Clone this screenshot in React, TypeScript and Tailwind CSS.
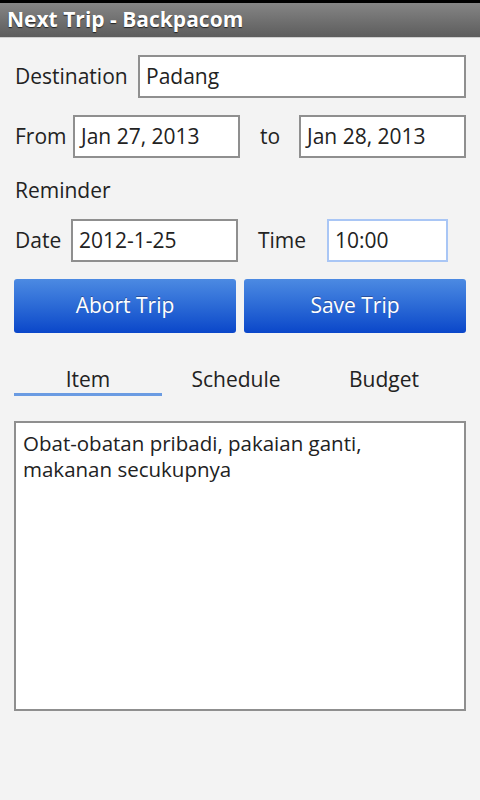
import { useState } from "react";

const tabs = ["Item", "Schedule", "Budget"];

function Field({ value, className = "", focused = false }: { value: string; className?: string; focused?: boolean }) {
  return (
    <div
      className={`h-[43px] bg-white border-2 flex items-center px-[6px] text-[21px] text-[#222] ${
        focused ? "border-[#a9c6f5]" : "border-[#8f8f8f]"
      } ${className}`}
    >
      {value}
    </div>
  );
}

export default function App() {
  const [tab, setTab] = useState(0);

  return (
    <div className="w-[480px] h-[800px] bg-[#f3f3f3] text-[#222] overflow-hidden" style={{ fontFamily: '"Open Sans", "Noto Sans", sans-serif' }}>
      <div className="h-[38px] border-t-[3px] border-black bg-gradient-to-b from-[#858585] to-[#5d5d5d] border-b border-b-[#cfcfcf] flex items-center px-[7px]">
        <span className="text-white font-bold text-[21px] [text-shadow:0_1px_1px_#222]">Next Trip - Backpacom</span>
      </div>

      <div className="px-[14px]">
        <div className="flex items-center mt-[17px]">
          <span className="text-[21px] ml-[1px] w-[123px]">Destination</span>
          <Field value="Padang" className="flex-1" />
        </div>

        <div className="flex items-center mt-[17px]">
          <span className="text-[21px] ml-[1px] w-[58px]">From</span>
          <Field value="Jan 27, 2013" className="w-[167px]" />
          <span className="text-[21px] ml-[20px] w-[39px]">to</span>
          <Field value="Jan 28, 2013" className="flex-1" />
        </div>

        <div className="text-[21px] ml-[1px] mt-[17px] h-[30px] leading-[30px]">Reminder</div>

        <div className="flex items-center mt-[14px]">
          <span className="text-[21px] ml-[1px] w-[56px]">Date</span>
          <Field value="2012-1-25" className="w-[167px]" />
          <span className="text-[21px] ml-[20px] w-[69px]">Time</span>
          <Field value="10:00" focused className="w-[121px]" />
        </div>

        <div className="flex gap-[8px] mt-[17px]">
          <button className="flex-1 h-[54px] rounded-[3px] bg-gradient-to-b from-[#4c8ae2] to-[#0a46c9] text-white text-[21px] [text-shadow:0_-1px_0_#2a4f9a]">
            Abort Trip
          </button>
          <button className="flex-1 h-[54px] rounded-[3px] bg-gradient-to-b from-[#4c8ae2] to-[#0a46c9] text-white text-[21px] [text-shadow:0_-1px_0_#2a4f9a]">
            Save Trip
          </button>
        </div>

        <div className="flex mt-[32px]">
          {tabs.map((t, i) => (
            <button key={t} onClick={() => setTab(i)} className="w-[148px] flex flex-col items-center">
              <span className="text-[21px] h-[28px] leading-[28px] text-[#222]">{t}</span>
              <span className={`h-[3px] w-full ${tab === i ? "bg-[#6a9be2]" : "bg-transparent"}`} />
            </button>
          ))}
        </div>

        <div className="mt-[25px] h-[290px] bg-white border-2 border-[#8f8f8f] px-[7px] pt-[7px] text-[20.5px] leading-[26px] text-[#222]">
          Obat-obatan pribadi, pakaian ganti,
          <br />
          makanan secukupnya
        </div>
      </div>
    </div>
  );
}
